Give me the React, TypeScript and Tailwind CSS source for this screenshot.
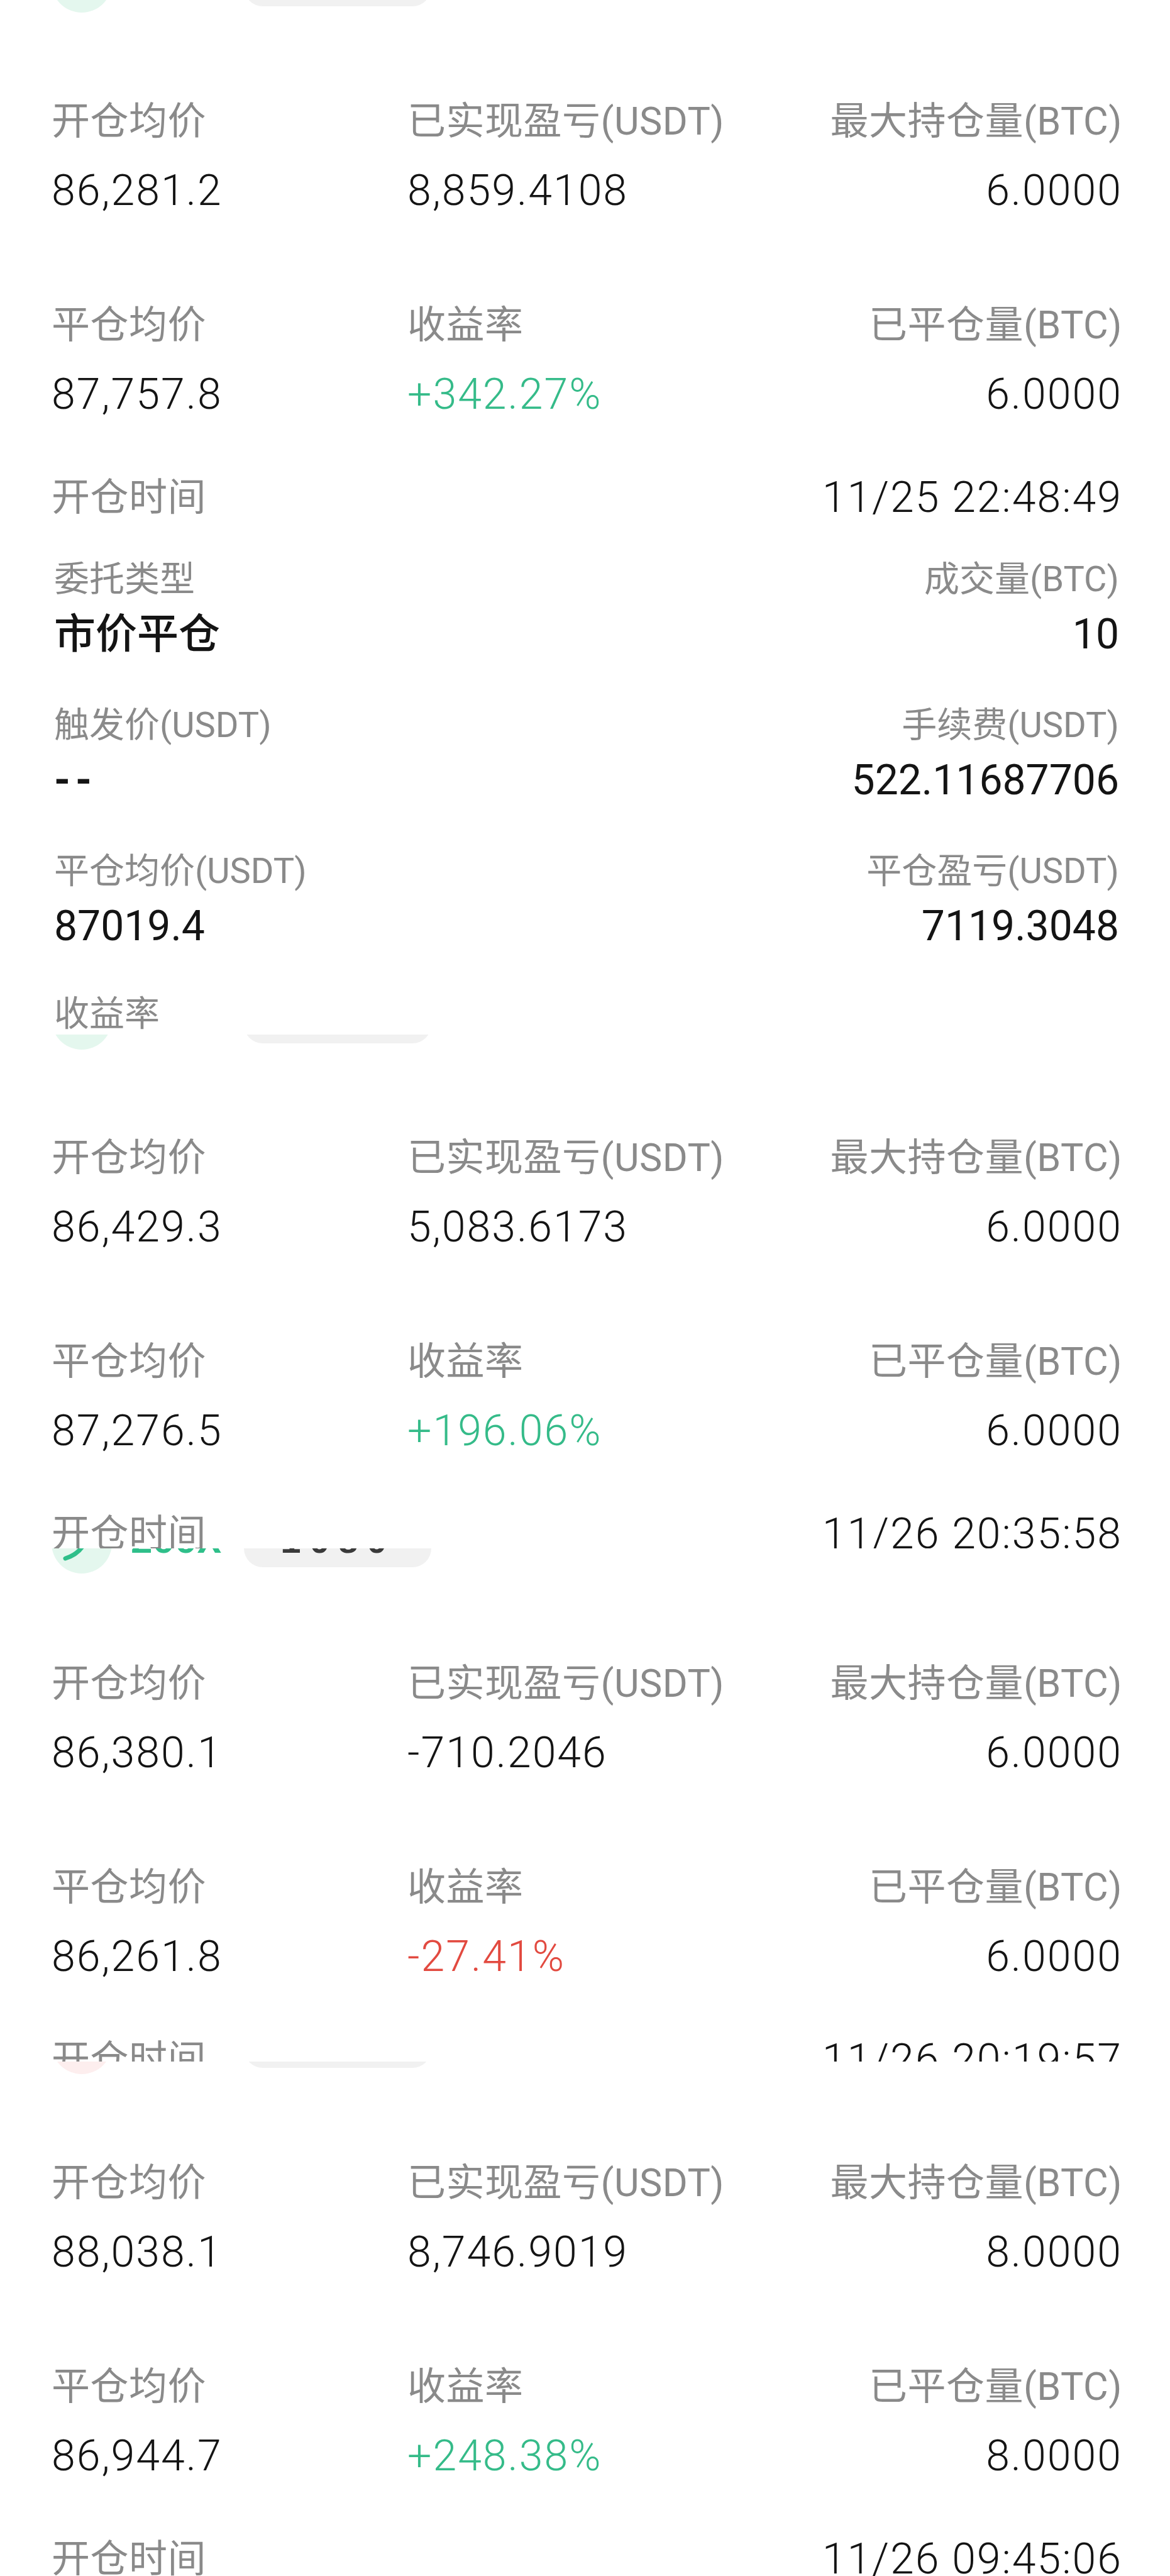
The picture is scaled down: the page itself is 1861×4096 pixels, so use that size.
import clsx from "clsx";

type Position = {
	open: string;
	pnl: string;
	maxPos: string;
	close: string;
	rate: string;
	closed: string;
	time: string;
};

const positions: Position[] = [
	{
		open: "86,281.2",
		pnl: "8,859.4108",
		maxPos: "6.0000",
		close: "87,757.8",
		rate: "+342.27%",
		closed: "6.0000",
		time: "11/25 22:48:49",
	},
	{
		open: "86,429.3",
		pnl: "5,083.6173",
		maxPos: "6.0000",
		close: "87,276.5",
		rate: "+196.06%",
		closed: "6.0000",
		time: "11/26 20:35:58",
	},
	{
		open: "86,380.1",
		pnl: "-710.2046",
		maxPos: "6.0000",
		close: "86,261.8",
		rate: "-27.41%",
		closed: "6.0000",
		time: "11/26 20:19:57",
	},
	{
		open: "88,038.1",
		pnl: "8,746.9019",
		maxPos: "8.0000",
		close: "86,944.7",
		rate: "+248.38%",
		closed: "8.0000",
		time: "11/26 09:45:06",
	},
];

const labelCls =
	"text-[61px] leading-[72px] tracking-[0.5px] text-[#8a8a8a] whitespace-nowrap";
const valueCls =
	"mt-[34px] text-[68px] leading-[80px] font-light tracking-[2px] whitespace-nowrap";

// bottom edge of the tag row that peeks out between the cards
function TagStrip({
	heightClass,
	tone,
	showText = false,
}: {
	heightClass: string;
	tone: "green" | "red";
	showText?: boolean;
}) {
	return (
		<div className={clsx("flex items-end overflow-hidden pl-[82px]", heightClass)}>
			<div className="flex items-center">
				<div
					className={clsx(
						"flex h-[96px] w-[96px] shrink-0 items-center justify-center rounded-full",
						tone === "red" ? "bg-[#fdeeee]" : "bg-[#e4f7ee]"
					)}
				>
					{showText && (
						<svg width="96" height="96" viewBox="0 0 96 96" fill="none">
							<path
								d="M58 28 Q54 62 22 72"
								stroke="#2fbf8a"
								strokeWidth="7"
								strokeLinecap="round"
							/>
						</svg>
					)}
				</div>
				<span
					className={clsx(
						"ml-[29px] w-[158px] pb-[12px] text-[62px] font-semibold leading-none text-[#2fbf8a]",
						!showText && "invisible"
					)}
				>
					200X
				</span>
				<div className="ml-[23px] flex h-[76px] w-[298px] items-center justify-center rounded-[30px] bg-[#f1f1f1]">
					{showText && (
						<span className="font-['Liberation_Mono',monospace] text-[56px] font-bold tracking-[12px] text-[#3a3a3a]">
							1080
						</span>
					)}
				</div>
			</div>
		</div>
	);
}

function Cell({
	label,
	value,
	right = false,
	valueColor = "text-[#141414]",
}: {
	label: string;
	value: string;
	right?: boolean;
	valueColor?: string;
}) {
	return (
		<div className={clsx("flex flex-col", right ? "items-end" : "items-start")}>
			<span className={labelCls}>{label}</span>
			<span className={clsx(valueCls, valueColor)}>{value}</span>
		</div>
	);
}

function PositionCard({
	item,
	className,
	timeClip,
}: {
	item: Position;
	className?: string;
	timeClip?: string;
}) {
	const rateColor = item.rate.startsWith("-") ? "text-[#e24a40]" : "text-[#35bb89]";
	return (
		<section className={clsx("pl-[82px] pr-[76px]", className)}>
			<div className="grid grid-cols-[566px_1fr_auto]">
				<Cell label="开仓均价" value={item.open} />
				<Cell label="已实现盈亏(USDT)" value={item.pnl} />
				<Cell label="最大持仓量(BTC)" value={item.maxPos} right />
			</div>
			<div className="mt-[138px] grid grid-cols-[566px_1fr_auto]">
				<Cell label="平仓均价" value={item.close} />
				<Cell label="收益率" value={item.rate} valueColor={rateColor} />
				<Cell label="已平仓量(BTC)" value={item.closed} right />
			</div>
			<div className={clsx("mt-[88px] flex justify-between", timeClip && "overflow-hidden", timeClip)}>
				<span className={labelCls}>开仓时间</span>
				<span className="text-[68px] leading-[72px] font-light tracking-[2px] text-[#141414]">
					{item.time}
				</span>
			</div>
		</section>
	);
}

const detailLabel = "text-[56px] leading-[66px] text-[#8a8a8a] whitespace-nowrap";
const detailValue = "mt-[17px] text-[66px] leading-[76px] text-[#141414] whitespace-nowrap";

function DetailRow({
	left,
	leftValue,
	right,
	rightValue,
	className,
	leftValueClass = "font-normal",
}: {
	left: string;
	leftValue: string;
	right: string;
	rightValue: string;
	className?: string;
	leftValueClass?: string;
}) {
	return (
		<div className={clsx("flex justify-between", className)}>
			<div className="flex flex-col items-start">
				<span className={detailLabel}>{left}</span>
				<span className={clsx(detailValue, leftValueClass)}>{leftValue}</span>
			</div>
			<div className="flex flex-col items-end">
				<span className={detailLabel}>{right}</span>
				<span className={clsx(detailValue, "font-normal")}>{rightValue}</span>
			</div>
		</div>
	);
}

function OrderDetail() {
	return (
		<div className="mt-[61px] pl-[86px] pr-[81px]">
			<DetailRow
				left="委托类型"
				leftValue="市价平仓"
				leftValueClass="font-medium"
				right="成交量(BTC)"
				rightValue="10"
			/>
			<DetailRow
				className="mt-[73px]"
				left="触发价(USDT)"
				leftValue="--"
				leftValueClass="font-bold tracking-[8px]"
				right="手续费(USDT)"
				rightValue="522.11687706"
			/>
			<DetailRow
				className="mt-[73px]"
				left="平仓均价(USDT)"
				leftValue="87019.4"
				right="平仓盈亏(USDT)"
				rightValue="7119.3048"
			/>
			<div className={clsx("mt-[68px]", detailLabel)}>收益率</div>
		</div>
	);
}

export default function App() {
	return (
		<div className="min-h-screen w-full bg-white font-['Roboto','Noto_Sans_CJK_SC',sans-serif]">
			<TagStrip heightClass="h-[20px]" tone="green" />
			<PositionCard item={positions[0]} className="pt-[137px]" />
			<OrderDetail />

			<TagStrip heightClass="h-[24px]" tone="green" />
			<PositionCard item={positions[1]} className="pt-[136px]" timeClip="h-[59px]" />

			<TagStrip heightClass="h-[40px]" tone="green" showText />
			<PositionCard item={positions[2]} className="pt-[139px]" timeClip="h-[39px]" />

			<TagStrip heightClass="h-[20px]" tone="red" />
			<PositionCard item={positions[3]} className="pt-[137px]" />
		</div>
	);
}
